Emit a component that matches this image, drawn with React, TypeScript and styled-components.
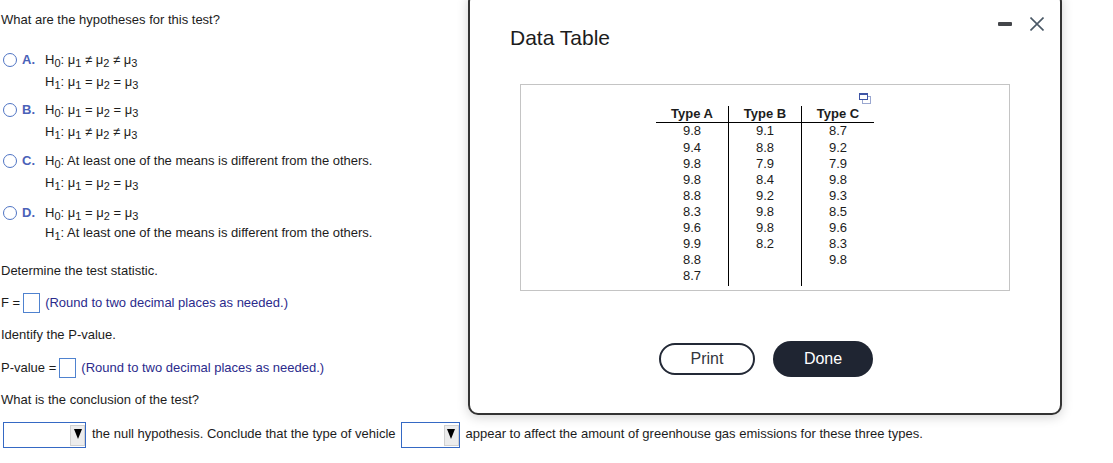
import React from "react"
import styled, { createGlobalStyle } from "styled-components"

const GlobalStyle = createGlobalStyle`
  html, body {
    margin: 0;
    padding: 0;
    background: #fff;
  }
  body {
    width: 1113px;
    height: 463px;
    overflow: hidden;
    font-family: "Liberation Sans", Arial, sans-serif;
    font-size: 13px;
    color: #1c1c1c;
  }
`

const Page = styled.div`
  position: relative;
  width: 1113px;
  height: 463px;
  overflow: hidden;
`

const Content = styled.div`
  display: flex;
  flex-direction: column;
  padding: 12px 0 0 1px;
`

const Line = styled.div<{ $mt?: number }>`
  display: flex;
  align-items: center;
  height: 16px;
  line-height: 16px;
  margin-top: ${({ $mt }) => $mt ?? 0}px;
  white-space: pre;
`

const Options = styled.div`
  display: flex;
  flex-direction: column;
  margin-top: 24px;
`

const Option = styled.div<{ $mt?: number; $gap?: number }>`
  display: grid;
  grid-template-columns: 14px 28px 1fr;
  row-gap: ${({ $gap }) => $gap ?? 6}px;
  margin-top: ${({ $mt }) => $mt ?? 0}px;
  margin-left: 2px;
  align-items: center;
`

const Radio = styled.span`
  box-sizing: border-box;
  width: 14px;
  height: 14px;
  border: 1.5px solid #4f74c4;
  border-radius: 50%;
`

const Letter = styled.span`
  font-weight: 700;
  color: #4a62b8;
  padding-left: 5px;
  line-height: 16px;
`

const Formula = styled.span<{ $row: number }>`
  grid-column: 3;
  grid-row: ${({ $row }) => $row};
  height: 16px;
  line-height: 16px;
  white-space: pre;
`

const Sub = styled.sub`
  font-size: 11px;
  line-height: 0;
  vertical-align: -3px;
`

const Hint = styled.span`
  color: #2b2b8c;
  margin-left: 5px;
`

const AnswerBox = styled.span<{ $ml: number }>`
  box-sizing: border-box;
  display: inline-block;
  width: 17px;
  height: 20px;
  margin-left: ${({ $ml }) => $ml}px;
  border: 1px solid #4f82cf;
  background: #fff;
`

const Select = styled.span<{ $w: number }>`
  box-sizing: border-box;
  display: flex;
  align-items: center;
  justify-content: flex-end;
  flex: none;
  width: ${({ $w }) => $w}px;
  height: 26px;
  border: 1px solid #3569c4;
  background: #fff;
`

const SelectArrow = styled.span`
  box-sizing: border-box;
  display: flex;
  align-items: flex-start;
  justify-content: center;
  width: 15px;
  height: 21px;
  padding-top: 3px;
  background: #ececec;
  border: 1px solid #d0d0d0;

  &::after {
    content: "";
    border-left: 4.5px solid transparent;
    border-right: 4.5px solid transparent;
    border-top: 10px solid #000;
  }
`

const ConclusionRow = styled.div`
  display: flex;
  align-items: center;
  height: 26px;
  margin: 14px 0 0 2px;
  white-space: pre;
`

const ConclusionText = styled.span`
  margin: 0 5px 0 6px;
  padding-bottom: 3px;
`

const Modal = styled.div`
  position: absolute;
  left: 468px;
  top: -8px;
  box-sizing: border-box;
  width: 594px;
  height: 423px;
  display: flex;
  flex-direction: column;
  padding: 0 0 0 40px;
  background: #fff;
  border: 2px solid #333;
  border-radius: 10px;
  box-shadow: 0 2px 12px rgba(0, 0, 0, 0.18);
`

const ModalHeader = styled.div`
  display: flex;
  align-items: flex-start;
  justify-content: space-between;
  height: 90px;
`

const ModalTitle = styled.h2`
  margin: 30px 0 0;
  font-size: 21px;
  line-height: 28px;
  font-weight: 400;
  color: #1c1c1c;
`

const WindowControls = styled.div`
  display: flex;
  align-items: center;
  gap: 18px;
  margin: 23px 16px 0 0;
`

const MinimizeBar = styled.span`
  width: 14px;
  height: 4px;
  border-radius: 1px;
  background: #44464a;
`

const TableBox = styled.div`
  box-sizing: border-box;
  position: relative;
  display: flex;
  justify-content: center;
  align-items: flex-start;
  width: 490px;
  height: 207px;
  margin-left: 10px;
  padding-top: 21px;
  border: 1px solid #c4c4c4;
`

const PopupIcon = styled.svg`
  position: absolute;
  top: 8px;
  right: 138px;
`

const DataTable = styled.table`
  border-collapse: collapse;
  table-layout: fixed;
  width: 216px;
  text-align: center;
  color: #1c1c1c;
`

const HeaderCell = styled.th`
  width: 72px;
  height: 16px;
  padding: 0;
  font-size: 13px;
  line-height: 16px;
  font-weight: 700;
  border-bottom: 1px solid #000;

  &:not(:last-child) {
    border-right: 1px solid #000;
  }
`

const BodyRow = styled.tr`
  &:nth-child(2) td {
    padding-top: 1px;
  }

  &:last-child td {
    padding-bottom: 2px;
  }
`

const BodyCell = styled.td`
  padding: 0;
  height: 16px;
  font-size: 13px;
  line-height: 16px;

  &:not(:last-child) {
    border-right: 1px solid #000;
  }
`

const ButtonRow = styled.div`
  display: flex;
  align-items: center;
  gap: 18px;
  margin: 50px 0 0 149px;
`

const PrintButton = styled.button`
  box-sizing: border-box;
  width: 96px;
  height: 32px;
  padding: 0;
  font: 16px "Liberation Sans", Arial, sans-serif;
  color: #33363d;
  background: #fff;
  border: 2px solid #232936;
  border-radius: 16px;
`

const DoneButton = styled.button`
  box-sizing: border-box;
  width: 100px;
  height: 36px;
  padding: 0;
  font: 16px "Liberation Sans", Arial, sans-serif;
  color: #fff;
  background: #1f2532;
  border: 0;
  border-radius: 18px;
`

const columns = [
  ["9.8", "9.4", "9.8", "9.8", "8.8", "8.3", "9.6", "9.9", "8.8", "8.7"],
  ["9.1", "8.8", "7.9", "8.4", "9.2", "9.8", "9.8", "8.2", "", ""],
  ["8.7", "9.2", "7.9", "9.8", "9.3", "8.5", "9.6", "8.3", "9.8", ""],
]

const H = ({ n }: { n: number }) => (
  <>
    H<Sub>{n}</Sub>:{" "}
  </>
)

const Mu = ({ n }: { n: number }) => (
  <>
    μ<Sub>{n}</Sub>
  </>
)

const Means = ({ op }: { op: string }) => (
  <>
    <Mu n={1} /> {op} <Mu n={2} /> {op} <Mu n={3} />
  </>
)

const AT_LEAST = "At least one of the means is different from the others."

export default function App() {
  return (
    <Page>
      <GlobalStyle />
      <Content>
        <Line>What are the hypotheses for this test?</Line>
        <Options>
          <Option>
            <Radio />
            <Letter>A.</Letter>
            <Formula $row={1}>
              <H n={0} />
              <Means op="≠" />
            </Formula>
            <Formula $row={2}>
              <H n={1} />
              <Means op="=" />
            </Formula>
          </Option>
          <Option $mt={12}>
            <Radio />
            <Letter>B.</Letter>
            <Formula $row={1}>
              <H n={0} />
              <Means op="=" />
            </Formula>
            <Formula $row={2}>
              <H n={1} />
              <Means op="≠" />
            </Formula>
          </Option>
          <Option $mt={13}>
            <Radio />
            <Letter>C.</Letter>
            <Formula $row={1}>
              <H n={0} />
              {AT_LEAST}
            </Formula>
            <Formula $row={2}>
              <H n={1} />
              <Means op="=" />
            </Formula>
          </Option>
          <Option $mt={14} $gap={4}>
            <Radio />
            <Letter>D.</Letter>
            <Formula $row={1}>
              <H n={0} />
              <Means op="=" />
            </Formula>
            <Formula $row={2}>
              <H n={1} />
              {AT_LEAST}
            </Formula>
          </Option>
        </Options>
        <Line $mt={22}>Determine the test statistic.</Line>
        <Line $mt={16}>
          F =<AnswerBox $ml={3} />
          <Hint>(Round to two decimal places as needed.)</Hint>
        </Line>
        <Line $mt={16}>Identify the P-value.</Line>
        <Line $mt={17}>
          P-value =<AnswerBox $ml={3} />
          <Hint>(Round to two decimal places as needed.)</Hint>
        </Line>
        <Line $mt={16}>What is the conclusion of the test?</Line>
        <ConclusionRow>
          <Select $w={83}>
            <SelectArrow />
          </Select>
          <ConclusionText>the null hypothesis. Conclude that the type of vehicle</ConclusionText>
          <Select $w={59}>
            <SelectArrow />
          </Select>
          <ConclusionText>appear to affect the amount of greenhouse gas emissions for these three types.</ConclusionText>
        </ConclusionRow>
      </Content>

      <Modal>
        <ModalHeader>
          <ModalTitle>Data Table</ModalTitle>
          <WindowControls>
            <MinimizeBar />
            <svg width="14" height="14" viewBox="0 0 14 14" fill="none" stroke="#4a5866" strokeWidth="1.6">
              <path d="M0.5 0.5 13.5 13.5M13.5 0.5 0.5 13.5" />
            </svg>
          </WindowControls>
        </ModalHeader>
        <TableBox>
          <PopupIcon width="12" height="11" viewBox="0 0 12 11" fill="none">
            <rect x="3.5" y="3.5" width="8" height="7" stroke="#9aa7d0" />
            <rect x="0.5" y="0.5" width="8" height="6" fill="#fff" stroke="#3f55a5" />
            <path d="M0.5 1.5h8" stroke="#3f55a5" />
          </PopupIcon>
          <DataTable>
            <thead>
              <tr>
                <HeaderCell>Type A</HeaderCell>
                <HeaderCell>Type B</HeaderCell>
                <HeaderCell>Type C</HeaderCell>
              </tr>
            </thead>
            <tbody>
              {columns[0].map((_, row) => (
                <BodyRow key={row}>
                  {columns.map((col, c) => (
                    <BodyCell key={c}>{col[row]}</BodyCell>
                  ))}
                </BodyRow>
              ))}
            </tbody>
          </DataTable>
        </TableBox>
        <ButtonRow>
          <PrintButton>Print</PrintButton>
          <DoneButton>Done</DoneButton>
        </ButtonRow>
      </Modal>
    </Page>
  )
}
